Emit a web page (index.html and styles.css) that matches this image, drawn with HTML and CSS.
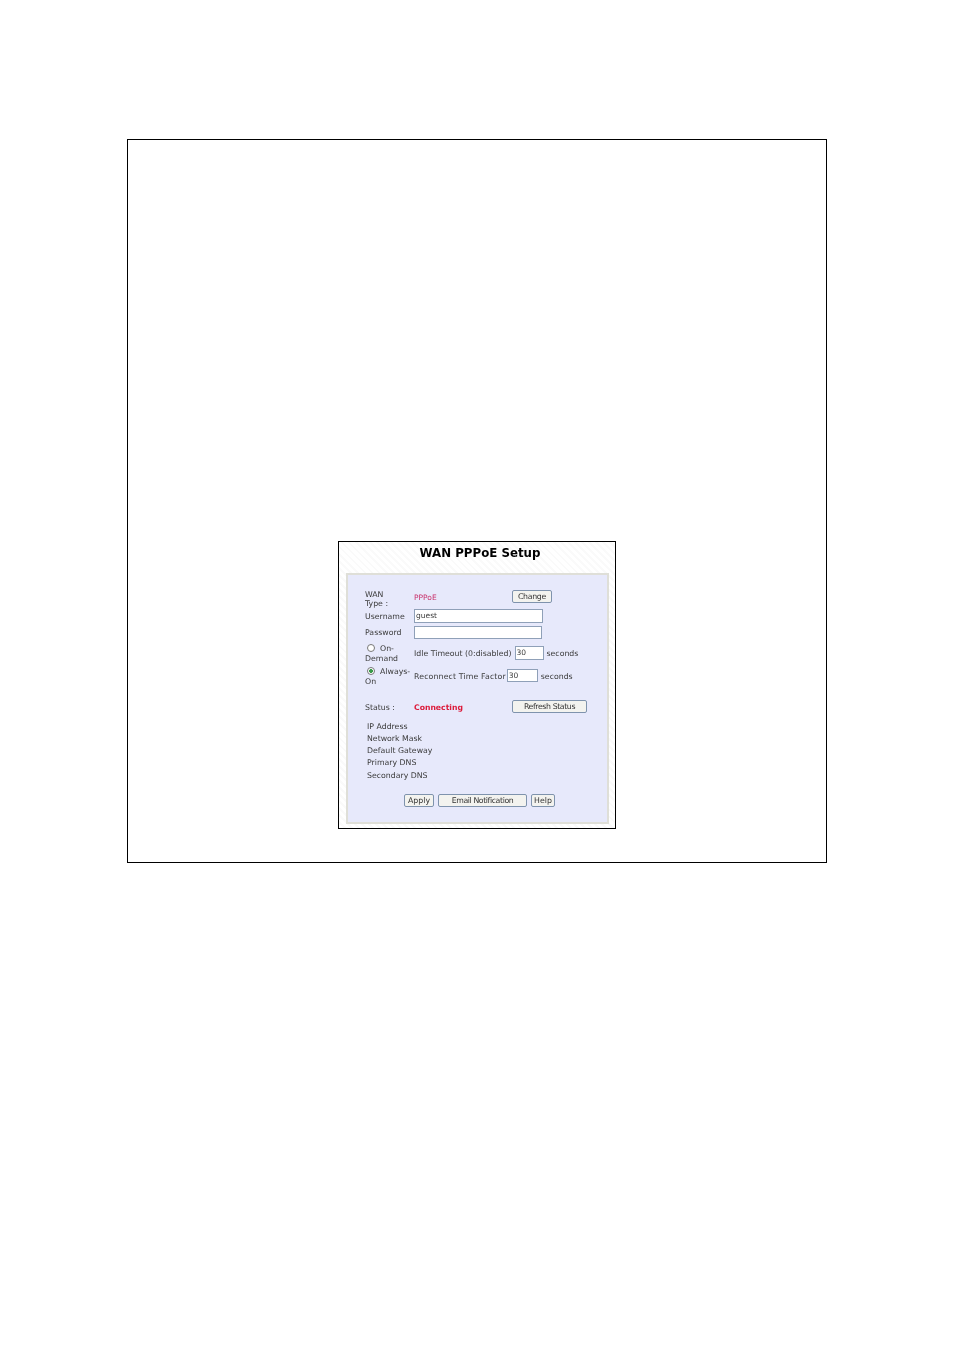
FILE: index.html
```html
<!DOCTYPE html>
<html>
<head>
	<meta charset="UTF-8">
	<title>WAN PPPoE Setup</title>
	<link rel="stylesheet" href="styles.css">
</head>
<body>
<div class="frame">
	<div class="shot">
		<h1 class="title">WAN PPPoE Setup</h1>
		<div class="panel">
			<div class="row row-type">
				<div class="label">WAN<br>Type :</div>
				<div class="pppoe">PPPoE</div>
				<span class="btn btn-change">Change</span>
			</div>
			<div class="row row-user">
				<div class="label">Username</div>
				<span class="input input-user">guest</span>
			</div>
			<div class="row row-pass">
				<div class="label">Password</div>
				<span class="input input-pass"></span>
			</div>
			<div class="row row-idle">
				<div class="label"><span class="radio"></span>On-<br>Demand</div>
				<span>Idle Timeout (0:disabled)</span>
				<span class="input input-idle">30</span>
				<span>seconds</span>
			</div>
			<div class="row row-recon">
				<div class="label"><span class="radio on"></span>Always-<br>On</div>
				<span class="recon-text">Reconnect Time Factor</span>
				<span class="input input-recon">30</span>
				<span>seconds</span>
			</div>
			<div class="row row-status">
				<div class="label">Status :</div>
				<div class="connecting">Connecting</div>
				<span class="btn btn-refresh">Refresh Status</span>
			</div>
			<ul class="info">
				<li>IP Address</li>
				<li>Network Mask</li>
				<li>Default Gateway</li>
				<li>Primary DNS</li>
				<li>Secondary DNS</li>
			</ul>
			<div class="actions">
				<span class="btn btn-apply">Apply</span>
				<span class="btn btn-email">Email Notification</span>
				<span class="btn btn-help">Help</span>
			</div>
		</div>
	</div>
</div>
</body>
</html>
```

FILE: styles.css
```css
*{margin: 0;padding: 0;box-sizing: border-box;}
ul,li{list-style: none;}
body{background: #fff;padding: 139px 0 0 127px;font-family: "DejaVu Sans", sans-serif;}

.frame{width: 700px;height: 724px;border: 1px solid #000;padding: 401px 0 0 210px;}
.shot{width: 278px;height: 288px;border: 1px solid #000;padding: 0 6px 5px 7px;background: repeating-linear-gradient(45deg, #fff 0, #fff 3px, #fafafa 3px, #fafafa 5px);color: #3a3a3a;}
.title{height: 31px;line-height: 22px;padding-left: 5px;text-align: center;font-size: 11.8px;font-weight: 700;color: #000;filter: blur(.3px);}

.panel{height: 251px;background: #e7e9fb;border: 2px solid #dfdfd8;padding: 14px 0 0 17px;font-size: 7.8px;}
.panel > *{filter: blur(.35px);}
.row{display: flex;align-items: center;}
.label{width: 49px;flex: none;line-height: 9.5px;}
.recon-text{letter-spacing: .14px;}

.row-type{height: 20px;}
.pppoe{width: 98px;margin-bottom: 3px;color: #c8306a;font-size: 7.5px;}
.row-user{height: 15px;}
.row-pass{height: 14px;margin-top: 2px;}
.row-idle{height: 21px;margin-top: 3px;}
.row-recon{height: 21px;margin-top: 2px;}
.row-status{height: 14px;margin-top: 14px;}
.connecting{width: 98px;margin-bottom: 2px;color: #dc1c3c;font-weight: 700;font-size: 7.7px;}

.input{display: block;height: 14px;background: #fff;border: 1px solid #8fa0b8;font-size: 7.5px;line-height: 11px;padding-left: 1px;}
.input-user{width: 129px;margin-bottom: 2px;}
.input-pass{width: 128px;height: 13px;margin-bottom: 2px;}
.input-idle{width: 29px;margin: 0 3px 2px;}
.input-recon{width: 31px;margin: 0 3px 2px 1px;height: 13px;}

.radio{display: inline-block;width: 8px;height: 8px;margin: 0 5px 0 2px;border: 1px solid #777;border-radius: 50%;background: #fff;vertical-align: -1px;}
.radio.on{background: radial-gradient(circle, #3a9a4a 0, #3a9a4a 1.6px, #fff 2.2px);}

.btn{display: block;height: 13px;line-height: 11px;text-align: center;background: #f3f3ef;border: 1px solid #7f93ad;border-radius: 2px;color: #333;font-size: 7.8px;}
.btn-change{width: 40px;margin-bottom: 5px;letter-spacing: -.3px;}
.btn-refresh{width: 75px;margin-bottom: 3px;letter-spacing: -.4px;}
.btn-apply{width: 30px;}
.btn-email{width: 89px;letter-spacing: -.4px;}
.btn-help{width: 24px;}

.info{margin: 5.5px 0 0 2px;}
.info li{height: 12.25px;line-height: 12px;}
.actions{display: flex;gap: 4px;margin: 12.5px 0 0 39px;}
```
